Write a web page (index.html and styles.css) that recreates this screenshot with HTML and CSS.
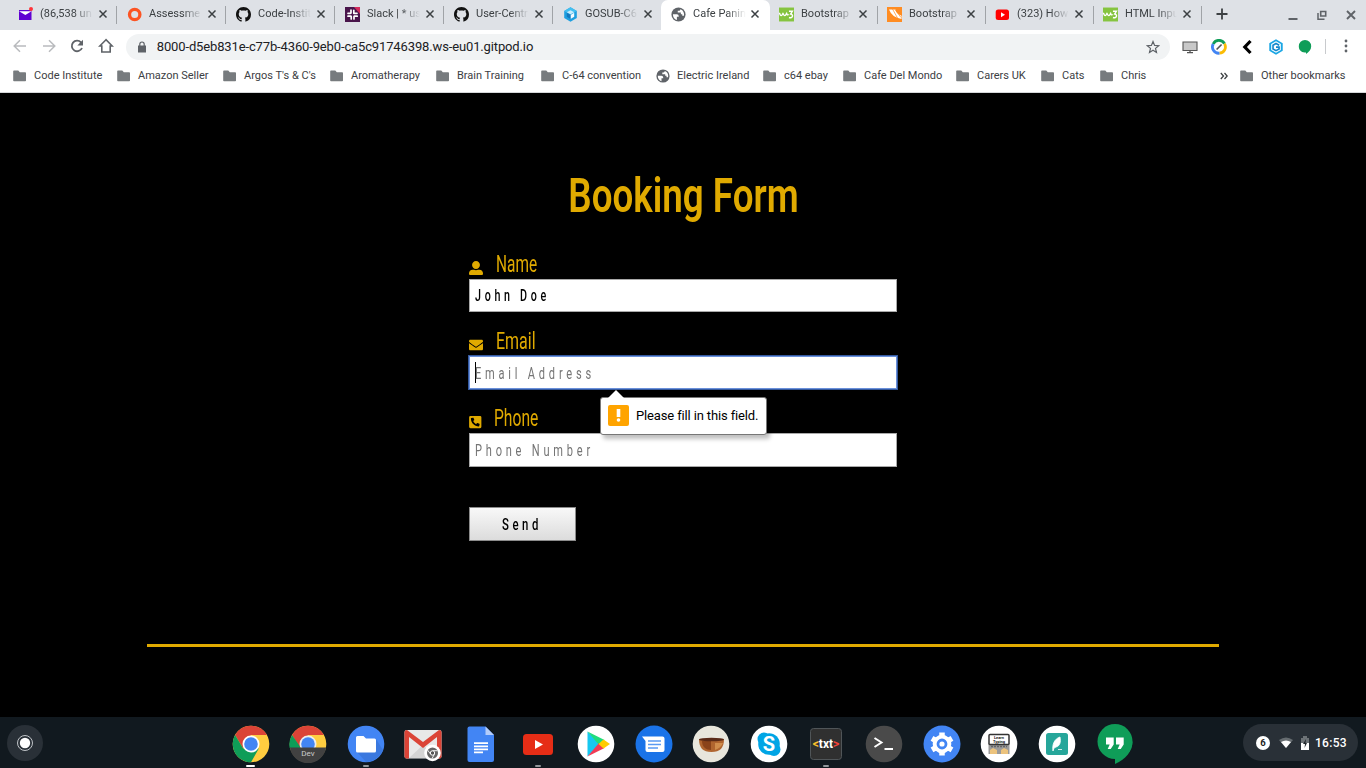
FILE: index.html
```html
<!DOCTYPE html>
<html lang="en">
<head>
<meta charset="utf-8">
<title>Cafe Panini</title>
<link rel="stylesheet" href="styles.css">
</head>
<body>
<svg class="defs" width="0" height="0">
  <symbol id="close" viewBox="0 0 10 10"><path d="M1.500 1.500l7 7M8.500 1.500l-7 7" stroke="#3c4043" stroke-width="1.500"/></symbol>
  <symbol id="folder" viewBox="0 0 14 12"><path d="M1 .5h4.300l1.500 1.700H12.200q.8 0 .8.800v7.500q0 .8-.8.800H1q-.8 0-.8-.8V1.300Q.2.500 1 .5z" fill="#777b7e"/></symbol>
  <symbol id="github" viewBox="0 0 16 16"><path fill="#111" d="M8 0C3.580 0 0 3.580 0 8c0 3.540 2.290 6.530 5.470 7.590.4.070.55-.17.55-.38 0-.19-.01-.82-.01-1.490-2.010.37-2.530-.49-2.690-.94-.09-.23-.48-.94-.82-1.130-.28-.15-.68-.52-.01-.53.63-.01 1.080.58 1.230.82.72 1.210 1.870.87 2.330.66.070-.52.28-.87.51-1.070-1.780-.2-3.640-.89-3.640-3.950 0-.87.31-1.590.82-2.150-.08-.2-.36-1.020.08-2.120 0 0 .67-.21 2.200.82.64-.18 1.320-.27 2-.27s1.360.09 2 .27c1.530-1.040 2.200-.82 2.200-.82.44 1.100.16 1.920.08 2.120.51.56.82 1.270.82 2.150 0 3.070-1.870 3.750-3.650 3.950.29.25.54.73.54 1.480 0 1.070-.01 1.930-.01 2.200 0 .21.15.46.55.38A8.010 8.010 0 0 0 16 8c0-4.420-3.580-8-8-8z"/></symbol>
  <symbol id="globe" viewBox="0 0 14 14"><circle cx="7" cy="7" r="6.600" fill="#5f6368"/><path d="M1.800 6.800h3.700q1.700 0 1.700 1.700v.7H5.500v3C3.200 11.600 1.700 9.500 1.800 6.800zM8.800 2c-.2 1.300-1 1.600-2.500 1.600v1.600h2.900v1.600h1.300v1.400h1.600c.5-2.500-.5-5.200-3.300-6.200z" fill="#fff"/></symbol>
  <symbol id="w3" viewBox="0 0 14 14"><path d="M0 .5h14v13H0z" fill="#86c440"/><path d="M.3 5.500l1 2q.7 1 1.400 0l1-1.500 1 1.500q.7 1 1.400 0l1-1.500q.5 2 2 1M9.300 4h3.200L10.900 6.500c2.700.2 2.200 4.500-1.600 3.300" fill="none" stroke="#fff" stroke-width="1.300"/></symbol>
  <symbol id="gitpod" viewBox="0 0 14 15"><path d="M7 .3l6.300 3.600v7.200L7 14.700.7 11.100V3.900z" fill="#1aa6e4"/><path d="M7 2.200L11.500 4.800v5.500L7 12.900l-4.500-2.600V4.800z" fill="#fff"/><path d="M10 5.800L7 4.200 4.200 5.800v3.500L7 10.900l2.900-1.600V7.600H7" fill="none" stroke="#1287cc" stroke-width="1.500"/></symbol>
  <symbol id="gitpod-tab" viewBox="0 0 14 15"><path d="M7 .3l6.300 3.600v7.200L7 14.700.7 11.100V3.900z" fill="#1e9fe0"/><path d="M7 .3l6.300 3.600L7 7.500.7 3.900z" fill="#43bff0"/><path d="M3.300 5.200L7 3.200l3.700 2L7 7.300z" fill="#c8ecfc"/><path d="M7 8l3.700-2.200v4L7 12z" fill="#f2fbff"/><path d="M3.300 5.800L7 8v4L3.300 9.800z" fill="#1478bd"/></symbol>
</svg>

<div class="tabs">
  <div class="tab"><svg class="fav" viewBox="0 0 15 15"><path d="M1 3h12.500v10H1z" fill="#6001d2"/><path d="M1 4.200h12.500L7.400 8z" fill="#fff"/><circle cx="13" cy="2" r="2" fill="#ff333a"/></svg><span class="title">(86,538 un</span><svg class="x"><use href="#close"/></svg></div>
  <div class="tab"><svg class="fav" viewBox="0 0 15 15"><circle cx="7.700" cy="7.500" r="5.200" fill="none" stroke="#fc5423" stroke-width="3.300"/></svg><span class="title">Assessme</span><svg class="x"><use href="#close"/></svg></div>
  <div class="tab"><svg class="fav"><use href="#github"/></svg><span class="title">Code-Instit</span><svg class="x"><use href="#close"/></svg></div>
  <div class="tab"><svg class="fav" viewBox="0 0 15 15"><path d="M0 0h15v15H0z" fill="#49154b"/><path d="M9 0h6v7z" fill="#d42b5c"/><g stroke="#fff" stroke-width="1.700" stroke-linecap="round"><path d="M6 3v3M3 6.300h2.500M8.800 3.300v3M9.500 6.300h2.500M3 9.200h3M6.200 9.500v2.500M9.200 9.200h3M9 9.500v2.500"/></g></svg><span class="title">Slack | * us</span><svg class="x"><use href="#close"/></svg></div>
  <div class="tab"><svg class="fav"><use href="#github"/></svg><span class="title">User-Centr</span><svg class="x"><use href="#close"/></svg></div>
  <div class="tab plain"><svg class="fav"><use href="#gitpod-tab"/></svg><span class="title">GOSUB-C6</span><svg class="x"><use href="#close"/></svg></div>
  <div class="tab active"><svg class="fav"><use href="#globe"/></svg><span class="title">Cafe Panin</span><svg class="x"><use href="#close"/></svg></div>
  <div class="tab late"><svg class="fav"><use href="#w3"/></svg><span class="title">Bootstrap</span><svg class="x"><use href="#close"/></svg></div>
  <div class="tab late"><svg class="fav" viewBox="0 0 15 15"><path d="M0 0h15v15H0z" fill="#ff8c22"/><path d="M2 2.500h6.500q.3 4 6 6.300V12Q5 10.500 2 2.500z" fill="#fff"/><path d="M5.500 2l5 9M8 2.500l6 8" stroke="#ff8c22" stroke-width=".7"/></svg><span class="title">Bootstrap</span><svg class="x"><use href="#close"/></svg></div>
  <div class="tab late"><svg class="fav" viewBox="0 0 15 15"><rect x=".7" y="2.500" width="13.300" height="10.500" rx="2.500" fill="#f00"/><path d="M6 5.300v5l4-2.500z" fill="#fff"/></svg><span class="title">(323) How</span><svg class="x"><use href="#close"/></svg></div>
  <div class="tab late"><svg class="fav"><use href="#w3"/></svg><span class="title">HTML Inpu</span><svg class="x"><use href="#close"/></svg></div>
  <svg class="plus" viewBox="0 0 12 12"><path d="M6 .5v11M.5 6h11" stroke="#3c4043" stroke-width="1.800"/></svg>
  <div class="winbtns">
    <svg viewBox="0 0 10 12"><path d="M.5 10h9" stroke="#5f6368" stroke-width="2"/></svg>
    <svg viewBox="0 0 10 12"><path d="M3.700 2.500h5v4.500h-5z" fill="none" stroke="#5f6368" stroke-width="1.600"/><path d="M1 4v6.200h6.500" fill="none" stroke="#5f6368" stroke-width="1.500"/></svg>
    <svg viewBox="0 0 10 12"><path d="M1 2l8 8M9 2l-8 8" stroke="#5f6368" stroke-width="1.900"/></svg>
  </div>
</div>

<div class="toolbar">
  <svg class="nav" viewBox="0 0 16 16"><path d="M14 8H2.500M8 2.200L2.200 8 8 13.800" fill="none" stroke="#b9bbbe" stroke-width="1.500"/></svg>
  <svg class="nav" viewBox="0 0 16 16"><path d="M2 8h11.500M8 2.200L13.800 8 8 13.800" fill="none" stroke="#b9bbbe" stroke-width="1.500"/></svg>
  <svg class="nav" viewBox="0 0 16 16"><path d="M13 10A5.300 5.300 0 1 1 12 4.300L13 5.300" fill="none" stroke="#5f6368" stroke-width="1.800"/><path d="M14 1.700v5.800H8.300z" fill="#5f6368"/></svg>
  <svg class="nav" viewBox="0 0 16 16"><path d="M8 1.700L1.800 8h2v6h8.400V8h2z" fill="none" stroke="#5f6368" stroke-width="1.600"/></svg>
  <div class="omnibox">
    <svg class="lock" viewBox="0 0 10 12"><path d="M1 4.500h8v7H1z" fill="#5f6368"/><path d="M2.800 5V3.200a2.200 2.200 0 0 1 4.400 0V5" fill="none" stroke="#5f6368" stroke-width="1.200"/></svg>
    <span class="url">8000-d5eb831e-c77b-4360-9eb0-ca5c91746398.ws-eu01.gitpod.io</span>
    <svg class="star" viewBox="0 0 14 14"><path d="M7 1.500l1.600 3.900 4.100.3-3.200 2.700 1 4.100L7 10.300l-3.500 2.200 1-4.100L1.300 5.700l4.100-.3z" fill="none" stroke="#5f6368" stroke-width="1.200"/></svg>
  </div>
  <div class="exts">
    <svg viewBox="0 0 16 16"><path d="M1 3h14v8.500H1z" fill="#c8c8c8" stroke="#555" stroke-width="1.100"/><path d="M5 13.700h6M8 12v2" stroke="#555" stroke-width="1.300"/></svg>
    <svg viewBox="0 0 16 16" fill="none" stroke-width="2.800"><path d="M2.200 5A6.300 6.300 0 0 1 13.500 4.700" stroke="#0f9d58"/><path d="M13.500 4.700A6.300 6.300 0 0 1 8.500 14.200" stroke="#fbbc05"/><path d="M8.500 14.200A6.300 6.300 0 0 1 2.200 5" stroke="#4285f4"/><path d="M5.600 10.500l5-5" stroke="#555" stroke-width="1.700"/></svg>
    <svg viewBox="0 0 16 16"><path d="M11.500 2L5.800 8l5.700 6" fill="none" stroke="#000" stroke-width="3.200"/></svg>
    <svg viewBox="0 0 16 16"><use href="#gitpod"/></svg>
    <svg viewBox="0 0 16 16"><path d="M8 1a6.200 6.200 0 0 1 6.200 6.300c0 3.400-2.500 6-5.200 7.700v-1.600C4.300 14 1.800 11 1.800 7.300A6.200 6.200 0 0 1 8 1z" fill="#0f9d58"/></svg>
  </div>
  <i class="sep"></i>
  <svg class="more" viewBox="0 0 4 14" fill="#5f6368"><circle cx="2" cy="2" r="1.400"/><circle cx="2" cy="7" r="1.400"/><circle cx="2" cy="12" r="1.400"/></svg>
</div>

<div class="bookmarks">
  <div class="bm"><svg><use href="#folder"/></svg>Code Institute</div>
  <div class="bm"><svg><use href="#folder"/></svg>Amazon Seller</div>
  <div class="bm"><svg><use href="#folder"/></svg>Argos T's &amp; C's</div>
  <div class="bm"><svg><use href="#folder"/></svg>Aromatherapy</div>
  <div class="bm"><svg><use href="#folder"/></svg>Brain Training</div>
  <div class="bm"><svg><use href="#folder"/></svg>C-64 convention</div>
  <div class="bm"><svg class="g"><use href="#globe"/></svg>Electric Ireland</div>
  <div class="bm"><svg><use href="#folder"/></svg>c64 ebay</div>
  <div class="bm"><svg><use href="#folder"/></svg>Cafe Del Mondo</div>
  <div class="bm"><svg><use href="#folder"/></svg>Carers UK</div>
  <div class="bm"><svg><use href="#folder"/></svg>Cats</div>
  <div class="bm"><svg><use href="#folder"/></svg>Chris</div>
  <div class="bm"><svg class="chev" viewBox="0 0 8 8"><path d="M.8 1l2.700 3L.8 7M4.500 1l2.700 3-2.700 3" fill="none" stroke="#3c4043" stroke-width="1.300"/></svg></div>
  <div class="bm"><svg><use href="#folder"/></svg>Other bookmarks</div>
</div>

<main class="page">
  <h1 class="heading"><span>Booking Form</span></h1>
  <form class="form">
    <label class="label"><svg class="ic" viewBox="0 0 512 512"><path d="M256 288c79.500 0 144-64.500 144-144S335.500 0 256 0 112 64.500 112 144s64.500 144 144 144zm128 32h-55.100c-22.200 10.200-46.900 16-72.900 16s-50.600-5.800-72.900-16H128C57.300 320 0 377.300 0 448v16c0 26.500 21.500 48 48 48h416c26.500 0 48-21.500 48-48v-16c0-70.700-57.300-128-128-128z"/></svg><span class="cond name">Name</span></label>
    <div class="field"><span class="cond">John Doe</span></div>
    <label class="label"><svg class="ic" viewBox="0 0 512 512"><path d="M502.300 190.800c3.900-3.100 9.700-.2 9.700 4.700V400c0 26.500-21.500 48-48 48H48c-26.500 0-48-21.500-48-48V195.600c0-5 5.700-7.800 9.700-4.700 22.400 17.400 52.100 39.500 154.100 113.600 21.100 15.400 56.700 47.800 92.200 47.600 35.700.3 72-32.800 92.300-47.600 102-74.100 131.600-96.300 154-113.700zM256 320c23.200.4 56.600-29.200 73.400-41.400 132.700-96.300 142.800-104.700 173.400-128.700 5.800-4.500 9.200-11.500 9.200-18.900v-19c0-26.500-21.500-48-48-48H48c-26.500 0-48 21.500-48 48v19c0 7.400 3.400 14.300 9.200 18.900 30.600 23.900 40.700 32.400 173.400 128.700 16.800 12.200 50.200 41.800 73.400 41.400z"/></svg><span class="cond email">Email</span></label>
    <div class="field focus"><i class="caret"></i><span class="cond hint">Email Address</span>
      <div class="bubble"><svg class="tip" viewBox="0 0 16 8"><path d="M0 8l8-8 8 8z" fill="#fff"/></svg><span class="warn"><svg viewBox="0 0 21 21"><path d="M8.700 4h3.600v8H8.700z" fill="#fff"/><circle cx="10.500" cy="15" r="1.800" fill="#fff"/></svg></span><span class="msg">Please fill in this field.</span></div>
    </div>
    <label class="label"><svg class="ic ph" viewBox="0 0 448 512"><path d="M400 32H48A48 48 0 0 0 0 80v352a48 48 0 0 0 48 48h352a48 48 0 0 0 48-48V80a48 48 0 0 0-48-48zm-16.390 307.370l-15 65A15 15 0 0 1 354 416C194 416 64 286.290 64 126a15.700 15.700 0 0 1 11.630-14.610l65-15A18.230 18.230 0 0 1 144 96a16.270 16.270 0 0 1 13.790 9.090l30 70A17.900 17.900 0 0 1 189 181a17 17 0 0 1-5.500 11.610l-37.890 31a231.910 231.910 0 0 0 110.780 110.780l31-37.890A17 17 0 0 1 299 291a17.850 17.850 0 0 1 5.910 1.210l70 30A16.250 16.250 0 0 1 384 336a17.410 17.410 0 0 1-.39 3.370z"/></svg><span class="cond tel">Phone</span></label>
    <div class="field last"><span class="cond hint">Phone Number</span></div>
    <button type="button" class="send"><span class="cond">Send</span></button>
  </form>
  <hr class="rule">
</main>

<footer class="shelf">
  <svg class="launcher" viewBox="0 0 36 36"><circle cx="18" cy="18" r="18" fill="#293037"/><circle cx="18" cy="18" r="7.500" fill="none" stroke="#c0c4c8"/><circle cx="18" cy="18" r="5.200" fill="#fff"/></svg>
  <div class="apps">
    <div class="app on"><svg viewBox="0 0 38 38"><circle cx="19" cy="19" r="18.300" fill="#ffcd40"/><path d="M3.100 10A18.300 18.300 0 0 1 34.900 10H19l-7.800 13.500z" fill="#db4437"/><path d="M3.100 10A18.300 18.300 0 0 0 19 37.300L26.800 23.500H11.200z" fill="#0f9d58"/><circle cx="19" cy="19" r="8.500" fill="#fff"/><circle cx="19" cy="19" r="6.800" fill="#4285f4"/></svg></div>
    <div class="app"><svg viewBox="0 0 38 38"><circle cx="19" cy="19" r="18.300" fill="#ffcd40"/><path d="M3.100 10A18.300 18.300 0 0 1 34.900 10H19l-7.800 13.500z" fill="#db4437"/><path d="M3.100 10A18.300 18.300 0 0 0 .7 23H12z" fill="#0f9d58"/><circle cx="19" cy="19" r="8.500" fill="#eee"/><circle cx="19" cy="19" r="6.800" fill="#4285f4"/><path d="M.9 22.500h36.200a18.300 18.300 0 0 1-36.200 0z" fill="#414141"/><text x="19" y="31" class="dev">Dev</text></svg></div>
    <div class="app run"><svg viewBox="0 0 38 38"><circle cx="19" cy="19" r="18.300" fill="#4285f4"/><path d="M10 27l9 10c7 0 14-5 17-12l-7-11z" fill="#3a78df"/><path d="M10.500 11h6l2.500 2.500h8.500q1.500 0 1.500 1.500v11q0 1.500-1.500 1.500h-17Q9 27.500 9 26V12.500Q9 11 10.500 11z" fill="#fff"/></svg></div>
    <div class="app"><svg viewBox="0 0 38 38"><rect x=".5" y="5" width="37" height="28.500" rx="2" fill="#e8e8e8"/><path d="M5 33L19 20l14 13" fill="#d4d4d4"/><path d="M.5 7v24.500q0 2 2 2H5V12l14 11 14-11v21.500h2.500q2 0 2-2V7q0-2-2.500-2L19 17 3 5Q.5 5 .5 7z" fill="#db4437"/><circle cx="28.500" cy="28" r="8.300" fill="#fff"/><circle cx="28.500" cy="28" r="5.500" fill="#666"/><path d="M28.500 25.700h5M26.500 29l-3-4M30.500 29l-2.500 4.500" stroke="#eee"/><circle cx="28.500" cy="28" r="2.200" fill="#555" stroke="#fff"/></svg></div>
    <div class="app"><svg viewBox="0 0 38 38"><path d="M7.500 1.500h16L32 10v25q0 2-2 2H7.500q-2 0-2-2V3.500q0-2 2-2z" fill="#4285f4"/><path d="M23.500 1.500L32 10h-8.500z" fill="#b3ccfa"/><path d="M12 18.200h14M12 21.300h14M12 24.300h14M12 27.300h9" stroke="#fff" stroke-width="1.700"/></svg></div>
    <div class="app run"><svg viewBox="0 0 38 38"><rect x="4" y="9" width="30" height="21" rx="3.500" fill="#e62d16"/><path d="M16 15v9l8-4.500z" fill="#fff"/></svg></div>
    <div class="app"><svg viewBox="0 0 38 38"><circle cx="19" cy="19" r="18.300" fill="#fff"/><path d="M10.500 6.500v25L23 19z" fill="#16c8f0"/><path d="M10.500 6.500L27.500 15 22 20z" fill="#20dc7d"/><path d="M10.500 31.500L27.500 23 22 18z" fill="#f03b55"/><path d="M26.500 14.500L33 19l-6.500 4.500L21.500 19z" fill="#fc0"/></svg></div>
    <div class="app"><svg viewBox="0 0 38 38"><circle cx="19" cy="19" r="18.500" fill="#1a73e8"/><path d="M7 11.500h20.500q2 0 2 2V25q0 2-2 2H12.500q-2 0-2-2V16z" fill="#fff"/><path d="M13 16h13M13 19.500h13M13 23h10" stroke="#5a9af2" stroke-width="1.500"/></svg></div>
    <div class="app"><svg viewBox="0 0 38 38"><circle cx="19" cy="19" r="18.300" fill="#e8e6dc"/><path d="M7 14c0 9 4 13 12.500 13S32 23 32 14z" fill="#b0652f"/><path d="M10 16c0 6 4 9 9 9V16z" fill="#8a431a"/><ellipse cx="19.500" cy="14.500" rx="12.500" ry="1.800" fill="#5a2a17"/><path d="M23 18h8q-2 5-8 7z" fill="#d08d4c"/></svg></div>
    <div class="app"><svg viewBox="0 0 38 38"><circle cx="19" cy="19" r="18.300" fill="#fff"/><circle cx="19" cy="19" r="10.800" fill="#00a5e5"/><circle cx="14" cy="14" r="6.500" fill="#00a5e5"/><circle cx="24" cy="24.500" r="6.500" fill="#00a5e5"/><text x="19" y="26" class="skype">S</text></svg></div>
    <div class="app run"><svg viewBox="0 0 38 38"><rect x="3.500" y="3.500" width="31" height="31" rx="3" fill="#303030" stroke="#505558"/><text x="19" y="23" class="txt"><tspan fill="#fbc02d">&lt;</tspan>txt<tspan fill="#f44336">&gt;</tspan></text></svg></div>
    <div class="app"><svg viewBox="0 0 38 38"><circle cx="19" cy="19" r="18.300" fill="#4a4a4a"/><path d="M9.500 13l7 4.500-7 4.500M19.500 24h8.500" fill="none" stroke="#fff" stroke-width="2"/></svg></div>
    <div class="app"><svg viewBox="0 0 38 38"><circle cx="19" cy="19" r="18.500" fill="#4285f4"/><circle cx="19" cy="19" r="9.300" fill="#fff"/><path d="M19 7.500v23M9 13.300l20 11.500M29 13.300L9 24.800" stroke="#fff" stroke-width="5.500"/><circle cx="19" cy="19" r="4" fill="#fff" stroke="#4285f4" stroke-width="2.800"/></svg></div>
    <div class="app"><svg viewBox="0 0 38 38"><circle cx="19" cy="19" r="18.300" fill="#fff"/><path d="M8.500 18h21v11h-21z" fill="#9a9a9a"/><rect x="9" y="9.500" width="20" height="10" rx="1" fill="#fff" stroke="#333" stroke-width="1.500"/><text x="19" y="13.800" class="type">Learn</text><text x="19" y="17.800" class="type">Typing</text><path d="M11 21.500h16" stroke="#666" stroke-width="1.300" stroke-dasharray="2 1"/><path d="M10 29v-4l3-2 4 2v4zM21 29v-4l3-2 4 2v4z" fill="#ecc37d"/></svg></div>
    <div class="app"><svg viewBox="0 0 38 38"><circle cx="19" cy="19" r="18.300" fill="#fff"/><rect x="8" y="8" width="22" height="22" rx="2.500" fill="#26a69a"/><path d="M15 26c-1-6 1-12 7-14 1 5 0 9-4 10l-2 1zM20 24.500h4" fill="#fff" stroke="#fff" stroke-width=".8"/></svg></div>
    <div class="app"><svg viewBox="0 0 38 38"><circle cx="20" cy="16.500" r="17.500" fill="#0f9d58"/><path d="M37.500 16.500C37.500 26 31 34 20 39V30z" fill="#0f9d58"/><path d="M11 12.500h7.700v7l-3 4.500h-3l2-4.500H11zM21 12.500h7.700v7l-3 4.500h-3l2-4.500H21z" fill="#fff"/></svg></div>
  </div>
  <div class="tray">
    <span class="count">6</span>
    <svg class="wifi" viewBox="0 0 14 12"><path d="M0 3Q7-2 14 3L7 11z" fill="#666c70"/><path d="M2 5q5-3 10 0l-5 6z" fill="#fff"/></svg>
    <svg class="bat" viewBox="0 0 8 14"><path d="M2 0h4v2h2v6H0V2h2z" fill="#6c7276"/><path d="M0 7h8v7H0z" fill="#fff"/><path d="M5 3L2 8h2l-.5 4L6 7H4.500z" fill="#20272c"/></svg>
    <span class="clock">16:53</span>
  </div>
</footer>
</body>
</html>
```
FILE: styles.css
```css
* { box-sizing: border-box; }
body { margin: 0; width: 1366px; height: 768px; overflow: hidden; display: flex; flex-direction: column; background: #000; font-family: Roboto, sans-serif; font-size: 11px; color: #3c4043; }
.defs { position: absolute; }
svg { flex: none; display: block; }

.tabs { height: 30px; background: #dee1e6; display: flex; padding-left: 8px; align-items: stretch; }
.tab { width: 109px; flex: none; display: flex; align-items: center; padding: 0 0 2px 10px; background: linear-gradient(#a0a3a7, #a0a3a7) right 6px / 1px 18px no-repeat; }
.tab.plain { background: none; width: 108px; }
.tab.active { background: #fff; border-radius: 7px 7px 0 0; padding-left: 10px; }
.tab.active .x { margin-left: 3px; }
.tab.late { width: 108px; padding-left: 9px; }
.fav { width: 15px; height: 15px; }
.title { margin-left: 7px; width: 54px; white-space: nowrap; line-height: 16px; -webkit-mask-image: linear-gradient(90deg, #000 62%, transparent 98%); mask-image: linear-gradient(90deg, #000 62%, transparent 98%); }
.tab.late .title { width: 53px; }
.x { width: 10px; height: 10px; margin-left: 4px; }
.plus { width: 12px; height: 12px; margin: 8px 0 0 14px; }
.winbtns { display: flex; gap: 19px; margin: 9px 0 0 60px; }
.winbtns svg { width: 10px; height: 12px; }

.toolbar { height: 33px; background: #fff; display: flex; align-items: center; padding-left: 12px; padding-bottom: 1px; }
.nav { width: 16px; height: 16px; margin-right: 12.700px; }
.omnibox { width: 1044px; height: 26px; margin-top: 1px; border-radius: 13px; background: #f1f3f4; display: flex; align-items: center; padding: 0 10px 0 11px; margin-left: -1px; flex: none; }
.lock { width: 10px; height: 12px; }
.url { font-size: 13px; color: #202124; margin-left: 10px; flex: 1; white-space: nowrap; letter-spacing: -.135px; }
.star { width: 14px; height: 14px; }
.exts { display: flex; gap: 12.800px; margin-left: 12px; padding-top: 1px; }
.exts svg { width: 16px; height: 16px; }
.sep { width: 1px; height: 15px; background: #c8cacd; margin-left: 12px; }
.more { width: 4px; height: 14px; margin-left: 18px; }

.bookmarks { height: 30px; background: #fff; border-bottom: 1px solid #d5d7d9; display: grid; grid-template-columns: 104px 106px 107px 106px 105px 115px 107px 80px 113px 85px 59px 120px 20px auto; padding: 0 0 4px 13px; align-items: center; }
.bm { display: flex; align-items: center; gap: 7px; white-space: nowrap; }
.bm svg { width: 14px; height: 12px; }
.bm svg.g { width: 14px; height: 14px; }
.bm svg.chev { width: 8px; height: 8px; }

.page { height: 624px; flex: none; background: #000; display: flex; flex-direction: column; align-items: center; padding-top: 72px; }
.heading { margin: 0; height: 85px; font-size: 49px; line-height: 62px; font-weight: 600; color: #e0aa00; width: 460px; text-align: center; }
.heading span { display: inline-block; white-space: nowrap; transform: scaleX(.75); }
.cond { display: inline-block; white-space: nowrap; transform-origin: 0 50%; }
.form { width: 428px; }
.label { height: 29px; display: flex; align-items: center; color: #e0aa00; font-size: 23px; line-height: 29px; }
.ic { width: 14px; height: 14px; margin-top: 7px; fill: #e0aa00; }
.ic.ph { width: 12.500px; }
.label .cond { margin-left: 13px; transform: scaleX(.67); }
.label .email { transform: scaleX(.695); }
.label .tel { margin-left: 12px; transform: scaleX(.68); }
.field { height: 33px; margin-bottom: 15px; background: #fff; border: 1px solid #a9a9a9; padding-left: 5px; display: flex; align-items: center; font-size: 16px; color: #000; position: relative; letter-spacing: 5.500px; font-weight: 500; }
.field .cond { transform: scaleX(.67); }
.field .hint { color: #757575; font-weight: 400; transform: scaleX(.69); }
.field.last { height: 34px; margin-bottom: 40px; }
.field.focus { border-color: #6a90da; box-shadow: 0 0 0 1px #34599f; padding-top: 1px; }
.caret { width: 1px; height: 21px; background: #000; margin: -1px -1px 0 0; }
.bubble { position: absolute; left: 130px; top: 40px; width: 167px; height: 38px; background: #fff; border: 1px solid #777; border-radius: 3px; box-shadow: 3px 4px 4px rgba(0,0,0,.25); display: flex; align-items: center; padding: 0 0 2px 7px; z-index: 2; letter-spacing: -.14px; font-size: 13px; font-weight: 400; }
.tip { position: absolute; left: 7px; top: -8px; width: 16px; height: 8px; }
.warn { width: 21px; height: 21px; background: #ffa400; border-radius: 2px; }
.msg { margin-left: 7px; white-space: nowrap; }
.send { display: flex; align-items: center; width: 107px; height: 34px; border: 1px solid #8b8b8b; background: linear-gradient(#f8f8f8, #dcdcdc); padding: 0 0 0 32px; font-family: Roboto, sans-serif; font-size: 16px; font-weight: 500; letter-spacing: 5px; color: #000; }
.send .cond { transform: scaleX(.71); }
.rule { width: 1072px; height: 3px; border: 0; background: #e0aa00; margin: 103px 0 0; }

.shelf { height: 51px; flex: none; background: #11191f; display: flex; align-items: center; padding: 0 8px 0 7px; }
.launcher { width: 36px; height: 36px; }
.apps { display: flex; gap: 19.600px; margin: 2px 0 0 188.500px; }
.app { width: 38px; height: 48px; padding-top: 5px; display: flex; flex-direction: column; gap: 2px; align-items: center; }
.app svg { width: 38px; height: 38px; overflow: visible; }
.app.on::after, .app.run::after { content: ""; width: 9px; height: 2px; flex: none; border-radius: 1px; background: #fff; }
.app.run::after { width: 6px; background: #92979b; }
.dev { font-size: 8px; fill: #ccc; text-anchor: middle; }
.skype { font-size: 20px; font-weight: 700; fill: #fff; text-anchor: middle; }
.txt { font-size: 12px; font-weight: 700; fill: #fff; text-anchor: middle; }
.type { font-size: 4px; font-weight: 700; fill: #222; text-anchor: middle; }
.tray { width: 115px; height: 37px; border-radius: 19px; background: #293037; margin-left: auto; display: flex; align-items: center; padding-left: 13px; color: #fff; }
.count { width: 14px; height: 14px; border-radius: 50%; background: #fff; color: #222; font-size: 9.500px; font-weight: 700; line-height: 14px; text-align: center; }
.wifi { width: 14px; height: 12px; margin-left: 9px; }
.bat { width: 8px; height: 14px; margin-left: 8px; }
.clock { margin-left: 6px; font-size: 12px; font-weight: 500; letter-spacing: .3px; }
```
